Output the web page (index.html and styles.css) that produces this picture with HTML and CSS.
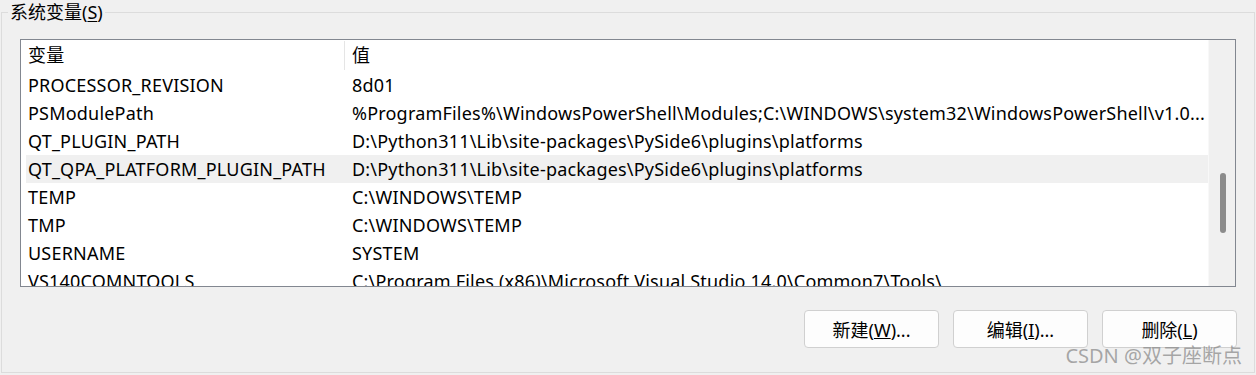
FILE: index.html
```html
<!DOCTYPE html>
<html>
<head>
  <meta charset="utf-8">
  <title>系统变量</title>
  <link rel="stylesheet" href="styles.css">
</head>
<body>
  <div class="group">
    <!-- group box caption, sits on top of the border line -->
    <div class="group-title">系统变量(<u>S</u>)</div>

    <div class="list">
      <div class="list-body">
        <div class="row header">
          <div class="c-name">变量</div>
          <div class="c-val">值</div>
        </div>
        <div class="row"><div class="c-name">PROCESSOR_REVISION</div><div class="c-val">8d01</div></div>
        <div class="row"><div class="c-name">PSModulePath</div><div class="c-val">%ProgramFiles%\WindowsPowerShell\Modules;C:\WINDOWS\system32\WindowsPowerShell\v1.0...</div></div>
        <div class="row"><div class="c-name">QT_PLUGIN_PATH</div><div class="c-val">D:\Python311\Lib\site-packages\PySide6\plugins\platforms</div></div>
        <div class="row selected"><div class="c-name">QT_QPA_PLATFORM_PLUGIN_PATH</div><div class="c-val">D:\Python311\Lib\site-packages\PySide6\plugins\platforms</div></div>
        <div class="row"><div class="c-name">TEMP</div><div class="c-val">C:\WINDOWS\TEMP</div></div>
        <div class="row"><div class="c-name">TMP</div><div class="c-val">C:\WINDOWS\TEMP</div></div>
        <div class="row"><div class="c-name">USERNAME</div><div class="c-val">SYSTEM</div></div>
        <div class="row"><div class="c-name">VS140COMNTOOLS</div><div class="c-val">C:\Program Files (x86)\Microsoft Visual Studio 14.0\Common7\Tools\</div></div>
      </div>
      <div class="scrollbar"><div class="thumb"></div></div>
    </div>

    <div class="buttons">
      <button class="btn">新建(<u>W</u>)...</button>
      <button class="btn">编辑(<u>I</u>)...</button>
      <button class="btn">删除(<u>L</u>)</button>
    </div>
  </div>

  <div class="watermark">CSDN @双子座断点</div>
</body>
</html>
```

FILE: styles.css
```css
/* page and group box */
body {
  margin: 0;
  background: #f0f0f0;
  font-family: "Noto Sans", "Noto Sans CJK SC", sans-serif;
  font-size: 18px;
  color: #000;
  width: 1256px;
  height: 375px;
  overflow: hidden;
  position: relative;
}
.group {
  margin: 12px 0 0 1px;
  width: 1252px;
  height: 359px;
  border: 1px solid #dcdcdc;
}
.group-title {
  width: max-content;
  margin: -12px 0 0 6px;
  padding: 0 2px;
  height: 22px;
  line-height: 22px;
  background: #f0f0f0;
}
.group-title u { text-underline-offset: 2px; }

/* list view */
.list {
  display: flex;
  margin: 16px 0 0 18px;
  width: 1214px;
  height: 246px;
  border: 1px solid #828790;
  background: #fff;
}
.list-body {
  flex: 1;
  overflow: hidden;
  padding-left: 5px;
  letter-spacing: 0.2px;
}
.row {
  display: flex;
  height: 28px;
  line-height: 28px;
  white-space: nowrap;
}
.row.header { height: 31px; line-height: 30px; }
.row.selected { background: #f0f0f0; }
.c-name {
  width: 316px;
  padding-left: 2px;
  overflow: hidden;
}
.c-val {
  flex: 1;
  padding-left: 8px;
  overflow: hidden;
}
.header .c-val {
  border-left: 1px solid #e5e5e5;
  padding-left: 7px;
  margin: 1px 0;
  line-height: 29px;
}
.scrollbar {
  width: 26px;
  background: #f0f0f0;
  border-left: 1px solid #f8f8f8;
}
.thumb {
  width: 6px;
  height: 60px;
  margin: 133px 0 0 11px;
  border-radius: 3px;
  background: #8b8b8b;
}

/* buttons */
.buttons {
  display: flex;
  justify-content: flex-end;
  gap: 14px;
  margin-top: 23px;
  padding-right: 17px;
}
.btn {
  width: 135px;
  height: 38px;
  border: 1px solid #d0d0d0;
  border-radius: 4px;
  background: #fdfdfd;
  font: inherit;
  color: #000;
  padding: 0;
}

.watermark {
  position: absolute;
  right: 14px;
  bottom: 6px;
  font-size: 20px;
  color: rgba(140, 140, 140, 0.75);
}
```
